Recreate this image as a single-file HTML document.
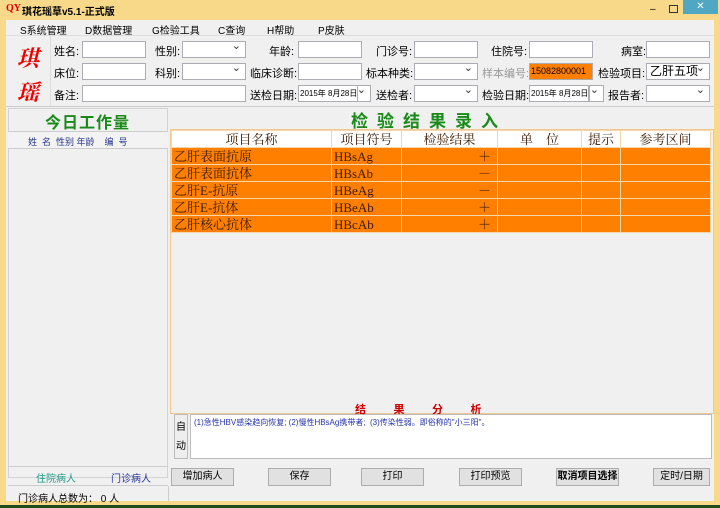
<!DOCTYPE html>
<html><head><meta charset="utf-8"><style>
*{box-sizing:border-box;margin:0;padding:0}
body{width:720px;height:508px;overflow:hidden;position:relative;background:#1e4d1e;font-family:"Liberation Sans","Noto Sans CJK SC",sans-serif;font-size:11px;color:#000}
.a{position:absolute}
#win{position:absolute;left:0;top:0;width:720px;height:505px;background:#f8d98a;}
#title{left:0;top:0;width:720px;height:20px;}
#client{left:6px;top:20px;width:708px;height:481px;background:#f0f0f0;}
.lbl{position:absolute;font-size:11px;white-space:nowrap}
.inp{position:absolute;background:#fff;border:1px solid #abadb3;height:17px;white-space:nowrap;overflow:hidden}
.sel{position:absolute;background:#fff;border:1px solid #abadb3;height:17px;white-space:nowrap;overflow:hidden}
.sel:after{content:"⌄";position:absolute;right:4px;top:-3px;font-size:11px;color:#333}
.btn{position:absolute;background:#e1e1e1;border:1px solid #adadad;height:18px;font-size:10px;text-align:center;line-height:16px}
table{border-collapse:collapse;font-family:"Liberation Serif","Noto Serif CJK SC",serif;table-layout:fixed}
td{border:1px solid #f5d6a8;height:17px;line-height:15px;font-size:13px;padding:0 2px;color:#3a1a00;white-space:nowrap;overflow:hidden}
</style></head><body>
<div id="win">
<div class="a" id="title">
 <span class="a" style="left:6px;top:3px;color:#d00;font-weight:bold;font-size:10px;font-family:'Liberation Serif',serif">QY</span>
 <span class="a" style="left:22px;top:3px;font-size:10px;font-weight:bold">琪花瑶草v5.1-正式版</span>
 <span class="a" style="left:650px;top:4px;font-size:10px">–</span>
 <span class="a" style="left:669px;top:5px;width:9px;height:8px;border:1px solid #333"></span>
 <span class="a" style="left:683px;top:0;width:35px;height:14px;color:#fff;text-align:center;font-size:10px;line-height:14px;background:#50a7c4">✕</span>
</div>
<div class="a" id="client">
 <div class="a" style="left:0;top:0;width:708px;height:15px;font-size:10px;">
  <span class="a" style="left:14px;top:2px"><u>S</u>系统管理</span>
  <span class="a" style="left:79px;top:2px"><u>D</u>数据管理</span>
  <span class="a" style="left:146px;top:2px"><u>G</u>检验工具</span>
  <span class="a" style="left:212px;top:2px"><u>C</u>查询</span>
  <span class="a" style="left:261px;top:2px"><u>H</u>帮助</span>
  <span class="a" style="left:312px;top:2px"><u>P</u>皮肤</span>
 </div>
 <div class="a" style="left:0;top:15px;width:708px;height:72px;border-top:1px solid #ddd;border-bottom:1px solid #ccc"></div>
 <span class="a" style="left:11px;top:22px;color:#e00;font-size:22px;font-weight:bold;font-style:italic;font-family:'Noto Serif CJK SC',serif">琪</span>
 <span class="a" style="left:11px;top:56px;color:#e00;font-size:22px;font-weight:bold;font-style:italic;font-family:'Noto Serif CJK SC',serif">瑶</span>
 <div class="a" style="left:44px;top:16px;width:1px;height:70px;background:#ddd"></div>
 <span class="lbl" style="left:48px;top:23px">姓名:</span><div class="inp" style="left:76px;top:21px;width:64px"></div>
 <span class="lbl" style="left:149px;top:23px">性别:</span><div class="sel" style="left:176px;top:21px;width:64px"></div>
 <span class="lbl" style="left:263px;top:23px">年龄:</span><div class="inp" style="left:292px;top:21px;width:64px"></div>
 <span class="lbl" style="left:370px;top:23px">门诊号:</span><div class="inp" style="left:408px;top:21px;width:64px"></div>
 <span class="lbl" style="left:485px;top:23px">住院号:</span><div class="inp" style="left:523px;top:21px;width:64px"></div>
 <span class="lbl" style="left:615px;top:23px">病室:</span><div class="inp" style="left:640px;top:21px;width:64px"></div>
 <span class="lbl" style="left:48px;top:45px">床位:</span><div class="inp" style="left:76px;top:43px;width:64px"></div>
 <span class="lbl" style="left:149px;top:45px">科别:</span><div class="sel" style="left:176px;top:43px;width:64px"></div>
 <span class="lbl" style="left:244px;top:45px">临床诊断:</span><div class="inp" style="left:292px;top:43px;width:64px"></div>
 <span class="lbl" style="left:360px;top:45px">标本种类:</span><div class="sel" style="left:408px;top:43px;width:64px"></div>
 <span class="lbl" style="left:476px;top:45px;color:#999">样本编号:</span><div class="a" style="left:523px;top:43px;width:64px;height:17px;background:#ff7f00;border:1px solid #abadb3;font-size:9px;line-height:15px;padding-left:1px;white-space:nowrap;overflow:hidden">15082800001</div>
 <span class="lbl" style="left:592px;top:45px">检验项目:</span><div class="sel" style="left:640px;top:43px;width:64px;font-size:12px;padding-left:3px;line-height:15px">乙肝五项</div>
 <span class="lbl" style="left:48px;top:67px">备注:</span><div class="inp" style="left:76px;top:65px;width:164px"></div>
 <span class="lbl" style="left:244px;top:67px">送检日期:</span><div class="inp" style="left:292px;top:65px;width:60px;font-size:8px;line-height:15px;padding-left:1px">2015年 8月28日</div>
 <div class="sel" style="left:351px;top:65px;width:14px"></div>
 <span class="lbl" style="left:370px;top:67px">送检者:</span><div class="sel" style="left:408px;top:65px;width:64px"></div>
 <span class="lbl" style="left:476px;top:67px">检验日期:</span><div class="inp" style="left:523px;top:65px;width:60px;font-size:8px;line-height:15px;padding-left:1px">2015年 8月28日</div>
 <div class="sel" style="left:583px;top:65px;width:15px"></div>
 <span class="lbl" style="left:602px;top:67px">报告者:</span><div class="sel" style="left:640px;top:65px;width:64px"></div>
 <div class="a" style="left:2px;top:88px;width:160px;height:370px;border:1px solid #d4d4d4;background:#f0f0f0"></div>
 <span class="a" style="left:39px;top:89px;color:#1a8a1a;font-size:16px;font-weight:bold;letter-spacing:1px">今日工作量</span>
 <div class="a" style="left:2px;top:111px;width:160px;height:18px;border-top:1px solid #ccc;border-bottom:1px solid #ccc;background:#f3f3f3;font-size:9px;color:#223388;padding:3px 0 0 20px;white-space:pre">姓  名  性别 年龄    编  号</div>
 <span class="a" style="left:345px;top:87px;color:#1a8a1a;font-size:17px;font-weight:bold;letter-spacing:9px">检验结果录入</span>
 <div class="a" style="left:164px;top:109px;width:544px;height:285px;border:1px solid #f0c890;background:#f0f0f0">
 <table style="width:540px;background:#ff7f00">
 <colgroup><col style="width:160px"><col style="width:70px"><col style="width:96px"><col style="width:84px"><col style="width:39px"><col></colgroup>
 <tr style="background:#fff"><td style="text-align:center">项目名称</td><td style="text-align:center">项目符号</td><td style="text-align:center">检验结果</td><td style="text-align:center">单　位</td><td style="text-align:center">提示</td><td style="text-align:center">参考区间</td></tr>
 <tr><td>乙肝表面抗原</td><td>HBsAg</td><td style="text-align:right;padding-right:6px">＋</td><td></td><td></td><td></td></tr>
 <tr><td>乙肝表面抗体</td><td>HBsAb</td><td style="text-align:right;padding-right:6px">－</td><td></td><td></td><td></td></tr>
 <tr><td>乙肝E-抗原</td><td>HBeAg</td><td style="text-align:right;padding-right:6px">－</td><td></td><td></td><td></td></tr>
 <tr><td>乙肝E-抗体</td><td>HBeAb</td><td style="text-align:right;padding-right:6px">＋</td><td></td><td></td><td></td></tr>
 <tr><td>乙肝核心抗体</td><td>HBcAb</td><td style="text-align:right;padding-right:6px">＋</td><td></td><td></td><td></td></tr>
 </table></div>
 <span class="a" style="left:349px;top:381px;color:#c00;font-size:11px;font-weight:bold;white-space:pre">结         果         分         析</span>
 <div class="a" style="left:168px;top:394px;width:14px;height:45px;border:1px solid #bbb;background:#eee;font-size:10px;padding-top:3px;text-align:center;line-height:19px">自<br>动</div>
 <div class="a" style="left:184px;top:394px;width:522px;height:45px;border:1px solid #bbb;background:#fff;font-size:8px;color:#2233aa;padding:2px 3px;white-space:pre">(1)急性HBV感染趋向恢复; (2)慢性HBsAg携带者;  (3)传染性弱。即俗称的"小三阳"。</div>
 <div class="a" style="left:2px;top:446px;width:160px;height:20px;border-top:1px solid #ccc;border-bottom:1px solid #ccc"></div>
 <span class="a" style="left:30px;top:450px;font-size:10px;color:#229988">住院病人</span>
 <span class="a" style="left:105px;top:450px;font-size:10px;color:#223399">门诊病人</span>
 <div class="btn" style="left:165px;top:448px;width:63px">增加病人</div>
 <div class="btn" style="left:262px;top:448px;width:63px">保存</div>
 <div class="btn" style="left:355px;top:448px;width:63px">打印</div>
 <div class="btn" style="left:453px;top:448px;width:63px">打印预览</div>
 <div class="btn" style="left:550px;top:448px;width:63px;font-weight:bold">取消项目选择</div>
 <div class="btn" style="left:647px;top:448px;width:57px">定时/日期</div>
 <span class="a" style="left:12px;top:470px;font-size:10px">门诊病人总数为： 0 人</span>
 <div class="a" style="left:162px;top:466px;width:1px;height:15px;background:#ccc"></div>
</div>
</div>
</body></html>
